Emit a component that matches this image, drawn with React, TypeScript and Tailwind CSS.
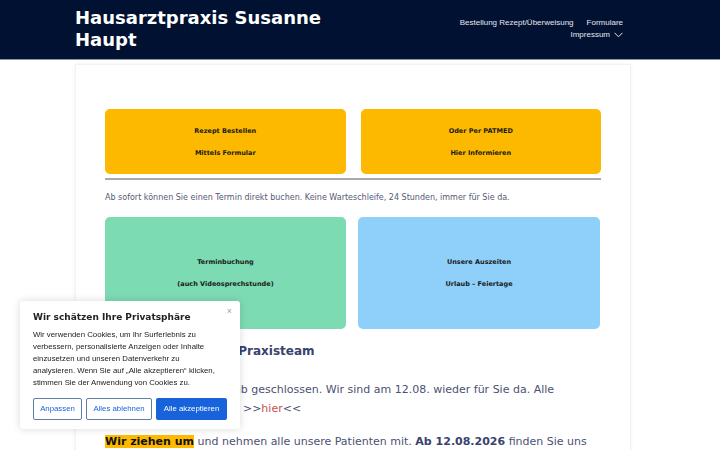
import React from "react";

const dv = { fontFamily: '"DejaVu Sans", sans-serif' };
const lib = { fontFamily: '"Liberation Sans", Arial, sans-serif' };

function Box({ bg, l1, l2, h, extra }: { bg: string; l1: string; l2: string; h: string; extra: string }) {
  return (
    <div className={`flex flex-col items-center justify-center rounded-[5px] ${bg} ${h} ${extra} text-[6.5px] font-bold text-[#1a1a1a] leading-[9px]`}>
      <div>{l1}</div>
      <div>{l2}</div>
    </div>
  );
}

export default function App() {
  return (
    <div className="min-h-[450px] bg-white" style={dv}>
      <header className="h-[60px] bg-[#011131] border-b border-[#8d93a3] flex justify-between">
        <div className="pl-[75px] pt-[7px] text-white font-bold text-[18px] leading-[22px]" style={dv}>
          Hausarztpraxis Susanne
          <br />
          Haupt
        </div>
        <nav className="pr-[97px] pt-[17px] flex flex-col items-end text-[8px] leading-[12px] text-[#e4e7ee]" style={lib}>
          <div className="flex gap-[13px]">
            <span>Bestellung Rezept/Überweisung</span>
            <span>Formulare</span>
          </div>
          <div className="flex items-center gap-[4px]">
            <span>Impressum</span>
            <svg width="9" height="6" viewBox="0 0 9 6" fill="none" stroke="#e4e7ee" strokeWidth="1">
              <path d="M0.5 0.8 L4.5 4.8 L8.5 0.8" />
            </svg>
          </div>
        </nav>
      </header>

      <main className="mx-[75px] mt-[4px] w-[556px] shadow-[0_0_4px_rgba(0,0,0,0.06)] border border-[#f2f2f2] px-[29px] pt-[44px] pb-[40px]">
        <div className="grid grid-cols-2 gap-[15px]">
          <Box bg="bg-[#fdb900]" h="h-[65px]" extra="gap-[13px] pt-[1px]" l1="Rezept Bestellen" l2="Mittels Formular" />
          <Box bg="bg-[#fdb900]" h="h-[65px]" extra="gap-[13px] pt-[1px]" l1="Oder Per PATMED" l2="Hier Informieren" />
        </div>
        <div className="mt-[4px] h-[2px] bg-[#a9a9a9]" />
        <p className="mt-[12px] text-[8px] leading-[12px] text-[#545a78]">
          Ab sofort können Sie einen Termin direkt buchen. Keine Warteschleife, 24 Stunden, immer für Sie da.
        </p>
        <div className="mt-[13px] grid grid-cols-[241px_242px] gap-[12px]">
          <Box bg="bg-[#7ddbb4]" h="h-[112px]" extra="gap-[13px]" l1="Terminbuchung" l2="(auch Videosprechstunde)" />
          <Box bg="bg-[#8fd0fb]" h="h-[112px]" extra="gap-[13px]" l1="Unsere Auszeiten" l2="Urlaub – Feiertage" />
        </div>
        <h2 className="mt-[14px] text-[12px] leading-[16px] font-bold text-[#39426e]">
          Informationen vom Praxisteam
        </h2>
        <p className="mt-[21px] text-[11px] leading-[19px] text-[#4b5173]">
          Noch bis 11.08. im Urlaub geschlossen. Wir sind am 12.08. wieder für Sie da. Alle
          <br />
          Vertretungen finden Sie: &gt;&gt;<span className="text-[#c4524e]">hier</span>&lt;&lt;
        </p>
        <p className="mt-[14px] text-[11px] leading-[19px] text-[#4b5173]">
          <span className="font-bold text-[#111] bg-[#ffba00]">Wir ziehen um</span> und nehmen alle unsere Patienten mit.{" "}
          <span className="font-bold text-[#39426e]">Ab 12.08.2026</span> finden Sie uns unter unserer neuen Adresse.
        </p>
      </main>

      <div className="fixed left-[20px] top-[301px] w-[220px] h-[128px] bg-white rounded-[3px] shadow-[0_0_8px_rgba(0,0,0,0.15)] px-[13px] pt-[10px]">
        <div className="absolute right-[8px] top-[4px] text-[9px] text-[#9a9a9a]" style={lib}>
          ×
        </div>
        <div className="text-[9px] leading-[12px] font-bold text-[#212121]">Wir schätzen Ihre Privatsphäre</div>
        <p className="mt-[6px] text-[7.8px] leading-[12px] text-[#212121] whitespace-nowrap" style={lib}>
          Wir verwenden Cookies, um Ihr Surferlebnis zu
          <br />
          verbessern, personalisierte Anzeigen oder Inhalte
          <br />
          einzusetzen und unseren Datenverkehr zu
          <br />
          analysieren. Wenn Sie auf „Alle akzeptieren“ klicken,
          <br />
          stimmen Sie der Anwendung von Cookies zu.
        </p>
        <div className="mt-[9px] flex gap-[4px] text-[7.8px]" style={lib}>
          <button className="h-[22px] w-[49px] border-[1.5px] border-[#5c7ea8] text-[#1863dc] rounded-[2px]">Anpassen</button>
          <button className="h-[22px] w-[66px] border-[1.5px] border-[#5c7ea8] text-[#1863dc] rounded-[2px]">Alles ablehnen</button>
          <button className="h-[22px] w-[71px] bg-[#1863dc] text-white rounded-[2px]">Alle akzeptieren</button>
        </div>
      </div>
    </div>
  );
}
